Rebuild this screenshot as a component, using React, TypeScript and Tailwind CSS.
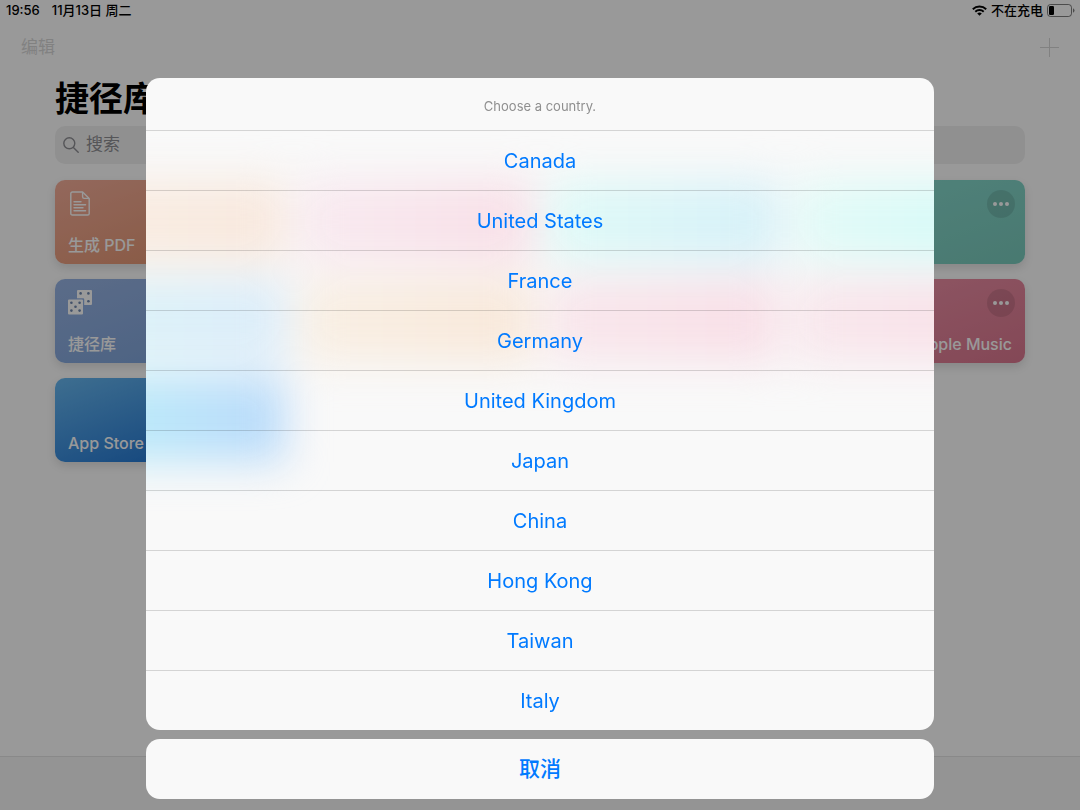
import type { ReactNode } from 'react';

const countries = [
  'Canada',
  'United States',
  'France',
  'Germany',
  'United Kingdom',
  'Japan',
  'China',
  'Hong Kong',
  'Taiwan',
  'Italy',
];

type Shortcut = {
  id: string;
  gradient: string;
  tint: string;
  label?: string;
  icon?: ReactNode;
  alignEnd?: boolean;
};

function DocumentIcon() {
  return (
    <svg width="20" height="25" viewBox="0 0 20 25" fill="none" stroke="currentColor" strokeWidth="1.4" strokeLinejoin="round">
      <path d="M2.4 1H12.6L19.2 7.4V22.4Q19.2 24 17.6 24H2.4Q0.8 24 0.8 22.4V2.6Q0.8 1 2.4 1Z" />
      <path d="M12.6 1.2V5.8Q12.6 7.4 14.2 7.4H19" />
      <path d="M4 10.8H11M4 13.8H15.6M4 16.8H13M4 19.8H15.6" strokeLinecap="round" />
    </svg>
  );
}

function DiceIcon() {
  const pips = [
    [3.4, 12.8],
    [11.6, 12.8],
    [7.5, 16.7],
    [3.4, 20.6],
    [11.6, 20.6],
    [12.6, 3.4],
    [20.4, 3.4],
    [20.4, 11.2],
  ];
  return (
    <svg width="24" height="25" viewBox="0 0 24 25">
      <path
        fill="currentColor"
        d="M10 0H23Q24 0 24 1V14Q24 15 23 15H16.2V9.2Q16.2 8.2 15.2 8.2H9V1Q9 0 10 0ZM1 9.4H14Q15 9.4 15 10.4V23.4Q15 24.4 14 24.4H1Q0 24.4 0 23.4V10.4Q0 9.4 1 9.4Z"
      />
      {pips.map(([cx, cy]) => (
        <circle key={`${cx}-${cy}`} cx={cx} cy={cy} r="1.3" fill="#7088b0" />
      ))}
    </svg>
  );
}

function SearchIcon() {
  return (
    <svg width="16" height="16" viewBox="0 0 16 16" fill="none" stroke="currentColor" strokeWidth="1.4" strokeLinecap="round">
      <circle cx="6.3" cy="6.3" r="5.5" />
      <path d="M10.4 10.4L15.2 15.2" />
    </svg>
  );
}

function WifiIcon() {
  return (
    <svg width="15" height="11" viewBox="0 0 15 11" fill="none" stroke="currentColor" strokeWidth="1.9">
      <path d="M0.8 4.2A9.6 9.6 0 0 1 14.2 4.2" />
      <path d="M3.3 6.7A6 6 0 0 1 11.7 6.7" />
      <path d="M7.5 10.8L5.2 8.5A3.3 3.3 0 0 1 9.8 8.5Z" fill="currentColor" stroke="none" />
    </svg>
  );
}

function BatteryIcon() {
  return (
    <svg width="28" height="13" viewBox="0 0 28 13">
      <rect x="0.5" y="0.5" width="24" height="12" rx="3" fill="none" stroke="currentColor" strokeOpacity="0.5" />
      <rect x="2" y="2" width="5" height="9" rx="1.2" fill="currentColor" />
      <path d="M26 4.3Q27.5 5 27.5 6.5Q27.5 8 26 8.7Z" fill="currentColor" fillOpacity="0.5" />
    </svg>
  );
}

// tint is the card's colour as it shows through the action sheet
const shortcuts: Shortcut[] = [
  { id: 'pdf', gradient: 'from-[#f5ae9a] to-[#e09068]', tint: 'from-[#f9eee3] to-[#f8e8de]', label: '生成 PDF', icon: <DocumentIcon /> },
  { id: 'pink', gradient: 'from-[#f0a0b8] to-[#e07898]', tint: 'from-[#f8eaf0] to-[#f8dfe7]' },
  { id: 'cyan', gradient: 'from-[#80f0dc] to-[#70c4e8]', tint: 'from-[#e0faf7] to-[#d6f0f8]' },
  { id: 'teal', gradient: 'from-[#88dcd0] to-[#7acabc]', tint: 'from-[#e4faf7] to-[#d2faf7]' },
  { id: 'library', gradient: 'from-[#98b4e4] to-[#78a0d8]', tint: 'from-[#dcf4f8] to-[#dcecf9]', label: '捷径库', icon: <DiceIcon /> },
  { id: 'orange', gradient: 'from-[#f4c8a0] to-[#e8ac78]', tint: 'from-[#f8efe4] to-[#f8e8da]' },
  { id: 'rose', gradient: 'from-[#f0a0b8] to-[#e07c98]', tint: 'from-[#f8e7ec] to-[#f8dfe7]' },
  { id: 'music', gradient: 'from-[#f094aa] to-[#dc7890]', tint: 'from-[#f8e8ed] to-[#f8dfe7]', label: 'Apple Music', alignEnd: true },
  { id: 'store', gradient: 'from-[#68b8f0] to-[#0060c8]', tint: 'from-[#bcf0f9] to-[#badafa]', label: 'App Store' },
];

function ShortcutCard({ gradient, label, icon, alignEnd }: Shortcut) {
  return (
    <article
      className={`flex h-[84px] flex-col justify-between rounded-[10px] bg-linear-to-br px-3 pt-2.5 pb-2 text-white shadow-[0_4px_10px_rgba(0,0,0,0.12)] ${gradient}`}
    >
      <div className="flex h-7 items-start justify-between">
        <span className="flex w-[26px] justify-center pt-px">{icon}</span>
        <button
          aria-label="More"
          className="-mr-0.5 flex size-7 items-center justify-center gap-0.5 rounded-full bg-black/10"
        >
          {[0, 1, 2].map((i) => (
            <span key={i} className="size-1 rounded-full bg-white" />
          ))}
        </button>
      </div>
      <h2 className={`px-px pb-px text-base leading-5 font-medium ${alignEnd ? 'text-right' : ''}`}>{label}</h2>
    </article>
  );
}

export default function App() {
  return (
    <div className="flex min-h-screen flex-col bg-white font-['Inter','Noto_Sans_CJK_SC',sans-serif] text-black">
      <header className="flex h-5 items-end justify-between pr-[5px] pl-1.5 text-[13px] leading-5 font-medium">
        <div className="flex gap-3">
          <span>19:56</span>
          <span>11月13日 周二</span>
        </div>
        <div className="flex items-center gap-1">
          <WifiIcon />
          <span>不在充电</span>
          <BatteryIcon />
        </div>
      </header>

      <nav className="flex h-13 items-center justify-between px-[21px] pt-[3px] text-[#d8d8d8]">
        <button className="text-[17px]">编辑</button>
        <button aria-label="Add">
          <svg width="19" height="19" viewBox="0 0 19 19" stroke="currentColor">
            <path d="M9.5 0V19M0 9.5H19" />
          </svg>
        </button>
      </nav>

      <main className="flex-1 px-[55px]">
        <h1 className="flex h-13 items-center text-[34px] font-bold">捷径库</h1>
        <label className="mt-0.5 flex h-[38px] items-center gap-[7px] rounded-[10px] bg-[#f1f1f1] px-2 text-[#8e8e93]">
          <SearchIcon />
          <input
            type="search"
            placeholder="搜索"
            className="min-w-0 flex-1 bg-transparent text-[17px] outline-none placeholder:text-[#8e8e93]"
          />
        </label>
        <section className="mt-4 grid grid-cols-4 gap-x-4 gap-y-[15px]">
          {shortcuts.map((s) => (
            <ShortcutCard key={s.id} {...s} />
          ))}
        </section>
      </main>

      <footer className="h-[54px] border-t border-[#e4e4e4] bg-[#f7f7f7]" />

      {/* Action sheet */}
      <div className="fixed inset-0 flex flex-col items-center justify-end gap-[9px] bg-black/40 pb-[11px]">
        <div
          role="dialog"
          aria-labelledby="sheet-title"
          className="relative w-[73%] overflow-hidden rounded-[14px] bg-[#f9f9f9]"
        >
          {/* frosted colours of the cards underneath */}
          <div
            aria-hidden="true"
            className="absolute top-[102px] right-[calc(55px-13.5vw)] left-[calc(55px-13.5vw)] grid grid-cols-4 gap-x-4 gap-y-[15px] blur-[20px]"
          >
            {shortcuts.map((s) => (
              <div key={s.id} className={`h-[84px] bg-linear-to-r ${s.tint}`} />
            ))}
          </div>
          <div className="relative">
            <p id="sheet-title" className="flex h-13 items-center justify-center pt-1.5 text-[13px] text-[#8f8f8f]">
              Choose a country.
            </p>
            {countries.map((c) => (
              <button
                key={c}
                className="block h-15 w-full border-t border-black/15 text-xl text-[#007aff]"
              >
                {c}
              </button>
            ))}
          </div>
        </div>
        <button className="h-15 w-[73%] rounded-[14px] bg-[#f9f9f9] text-[21px] font-medium text-[#007aff]">
          取消
        </button>
      </div>
    </div>
  );
}
